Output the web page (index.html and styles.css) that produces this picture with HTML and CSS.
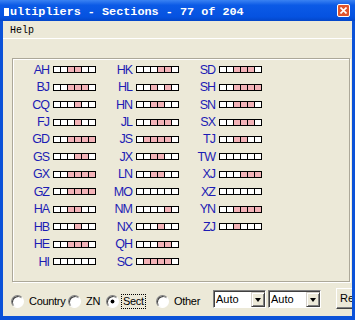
FILE: index.html
```html
<html>
<head>
<meta charset="UTF-8">
<link rel="stylesheet" href="styles.css">
</head>
<body>
<div class="window">
  <div class="titlebar">
    <span class="title-icon"></span>
    <span class="title-text">ultipliers - Sections - 77 of 204</span>
    <span class="close"><svg width="7" height="7" viewBox="0 0 7 7"><path d="M0.5 0.5 L6.5 6.5 M6.5 0.5 L0.5 6.5" stroke="#fff" stroke-width="1.6"/></svg></span>
  </div>
  <div class="client">
    <div class="menubar"><span class="menu-item">Help</span></div>

    <div class="group">
      <div class="grid" id="grid"></div>
    </div>

    <div class="controls">
      <label class="opt opt-country"><span class="radio"></span><span class="opt-text">Country</span></label>
      <label class="opt opt-zn"><span class="radio"></span><span class="opt-text">ZN</span></label>
      <label class="opt opt-sect"><span class="radio on"></span><span class="opt-text focus">Sect</span></label>
      <label class="opt opt-other"><span class="radio"></span><span class="opt-text">Other</span></label>
      <div class="combo"><span class="combo-text">Auto</span><span class="combo-btn"><span class="arrow"></span></span></div>
      <div class="combo"><span class="combo-text">Auto</span><span class="combo-btn"><span class="arrow"></span></span></div>
      <div class="btn">Re</div>
    </div>
  </div>
</div>

<script>
// section code + worked bands (1 = worked)
var sections = [
  ["AH","001100"],["BJ","001110"],["CQ","000100"],["FJ","000100"],
  ["GD","001111"],["GS","000110"],["GX","001111"],["GZ","001111"],
  ["HA","001100"],["HB","000100"],["HE","001110"],["HI","000000"],
  ["HK","000110"],["HL","001010"],["HN","001100"],["JL","001110"],
  ["JS","011110"],["JX","001100"],["LN","001100"],["MO","000000"],
  ["NM","000010"],["NX","000100"],["QH","000110"],["SC","011110"],
  ["SD","001110"],["SH","001111"],["SN","001110"],["SX","001110"],
  ["TJ","001100"],["TW","000000"],["XJ","000111"],["XZ","000000"],
  ["YN","001111"],["ZJ","001000"]
]

var html = ""
for(var i = 0; i < sections.length; i++){
    html += '<div class="item"><span class="code">' + sections[i][0] + '</span><span class="box">'
    var bands = sections[i][1]
    for(var j = 0; j < bands.length; j++){
        html += bands[j] == "1" ? '<span class="cell on"></span>' : '<span class="cell"></span>'
    }
    html += '</span></div>'
}
document.getElementById("grid").innerHTML = html
</script>
</body>
</html>
```

FILE: styles.css
```css
body {
  margin: 0;
  font-family: "Liberation Sans", Arial, sans-serif;
}

.window {
  width: 355px;
  height: 320px;
  background: #0b52d8;
  display: flex;
  flex-direction: column;
  overflow: hidden;
}

/* title bar */
.titlebar {
  height: 21px;
  flex-shrink: 0;
  display: flex;
  align-items: flex-start;
  padding-left: 4px;
  color: #fff;
  background: linear-gradient(#3a82f2, #0b5ae6 25%, #0552e0 80%, #0446c8);
  overflow: hidden;
}
.title-icon {
  width: 5px;
  height: 8px;
  margin: 8px 1px 0 0;
  background: #fff;
}
.title-text {
  font: bold 11.8px/19px "Liberation Mono", monospace;
  padding-top: 3px;
  white-space: nowrap;
}
.close {
  width: 13px;
  height: 13px;
  box-sizing: border-box;
  margin: 4px 5px 0 auto;
  border: 1px solid #fff;
  border-radius: 2px;
  background: #e0542c;
  display: flex;
  align-items: center;
  justify-content: center;
}

/* client area */
.client {
  flex: 1;
  margin: 0 3px 4px 3px;
  background: #ece9d8;
  display: flex;
  flex-direction: column;
  overflow: hidden;
}
.menubar {
  height: 15px;
  padding: 2px 0 0 7px;
  border-bottom: 1px solid #fff;
  font: 10px/15px "Liberation Mono", monospace;
  color: #000;
}

/* group box */
.group {
  width: 338px;
  height: 224px;
  box-sizing: border-box;
  margin: 19px 0 0 9px;
  padding: 2px 0 0 2px;
  border: 1px solid #aca899;
  box-shadow: 1px 1px 0 #fff, inset 1px 1px 0 #fff;
}
.grid {
  display: grid;
  grid-auto-flow: column;
  grid-template-rows: repeat(12, 17.45px);
  grid-template-columns: repeat(3, 83px);
}
.item {
  display: flex;
  align-items: center;
}
.code {
  width: 34px;
  margin-right: 4px;
  text-align: right;
  font-size: 12.5px;
  letter-spacing: -1px;
  color: #1c1cb4;
}
.box {
  display: flex;
}
.cell {
  width: 6px;
  height: 5px;
  border: 1px solid #000;
  background: #fff;
}
.cell + .cell {
  margin-left: -1px;
}
.cell.on {
  background: #f3b3b8;
}

/* bottom controls */
.controls {
  display: flex;
  align-items: flex-start;
  margin: 6px 0 0 8px;
  font-size: 11px;
  white-space: nowrap;
}
.opt {
  display: flex;
  align-items: flex-start;
  margin-top: 6px;
  flex-shrink: 0;
}
.opt-country { width: 57px; }
.opt-zn { width: 38px; }
.opt-sect { width: 50px; }
.opt-other { width: 57px; }

.radio {
  width: 13px;
  height: 13px;
  box-sizing: border-box;
  margin: 1px 3px 0 0;
  border-radius: 50%;
  border: 1px solid;
  border-color: #808080 #fff #fff #808080;
  box-shadow: inset 1px 1px 0 #404040;
  background: #fff;
}
.radio.on {
  background: radial-gradient(circle, #000 1.6px, #fff 2.3px);
}
.opt-sect .radio {
  margin-right: 2px;
}
.opt-text {
  line-height: 13px;
  padding: 0 1px;
  border: 1px solid transparent;
  letter-spacing: -0.3px;
}
.opt-text.focus {
  border: 1px dotted #000;
}

.combo {
  width: 53px;
  height: 18px;
  box-sizing: border-box;
  margin: 2px 2px 0 0;
  flex-shrink: 0;
  display: flex;
  background: #fff;
  border: 1px solid;
  border-color: #808080 #fff #fff #808080;
  box-shadow: inset 1px 1px 0 #404040;
}
.combo-text {
  flex: 1;
  padding: 2px 0 0 2px;
  line-height: 12px;
}
.combo-btn {
  width: 14px;
  margin: 1px 0 0 0;
  box-sizing: border-box;
  background: #ece9d8;
  border: 1px solid;
  border-color: #d4d0c8 #404040 #404040 #d4d0c8;
  box-shadow: inset 1px 1px 0 #fff, inset -1px -1px 0 #808080;
  display: flex;
  align-items: center;
  justify-content: center;
}
.arrow {
  width: 0;
  height: 0;
  border-left: 3.5px solid transparent;
  border-right: 3.5px solid transparent;
  border-top: 4px solid #000;
}

.btn {
  width: 40px;
  height: 21px;
  box-sizing: border-box;
  margin-left: 13px;
  flex-shrink: 0;
  padding: 3px 0 0 3px;
  background: #ece9d8;
  border: 1px solid;
  border-color: #fff #404040 #404040 #fff;
  box-shadow: inset -1px -1px 0 #808080;
}
```
